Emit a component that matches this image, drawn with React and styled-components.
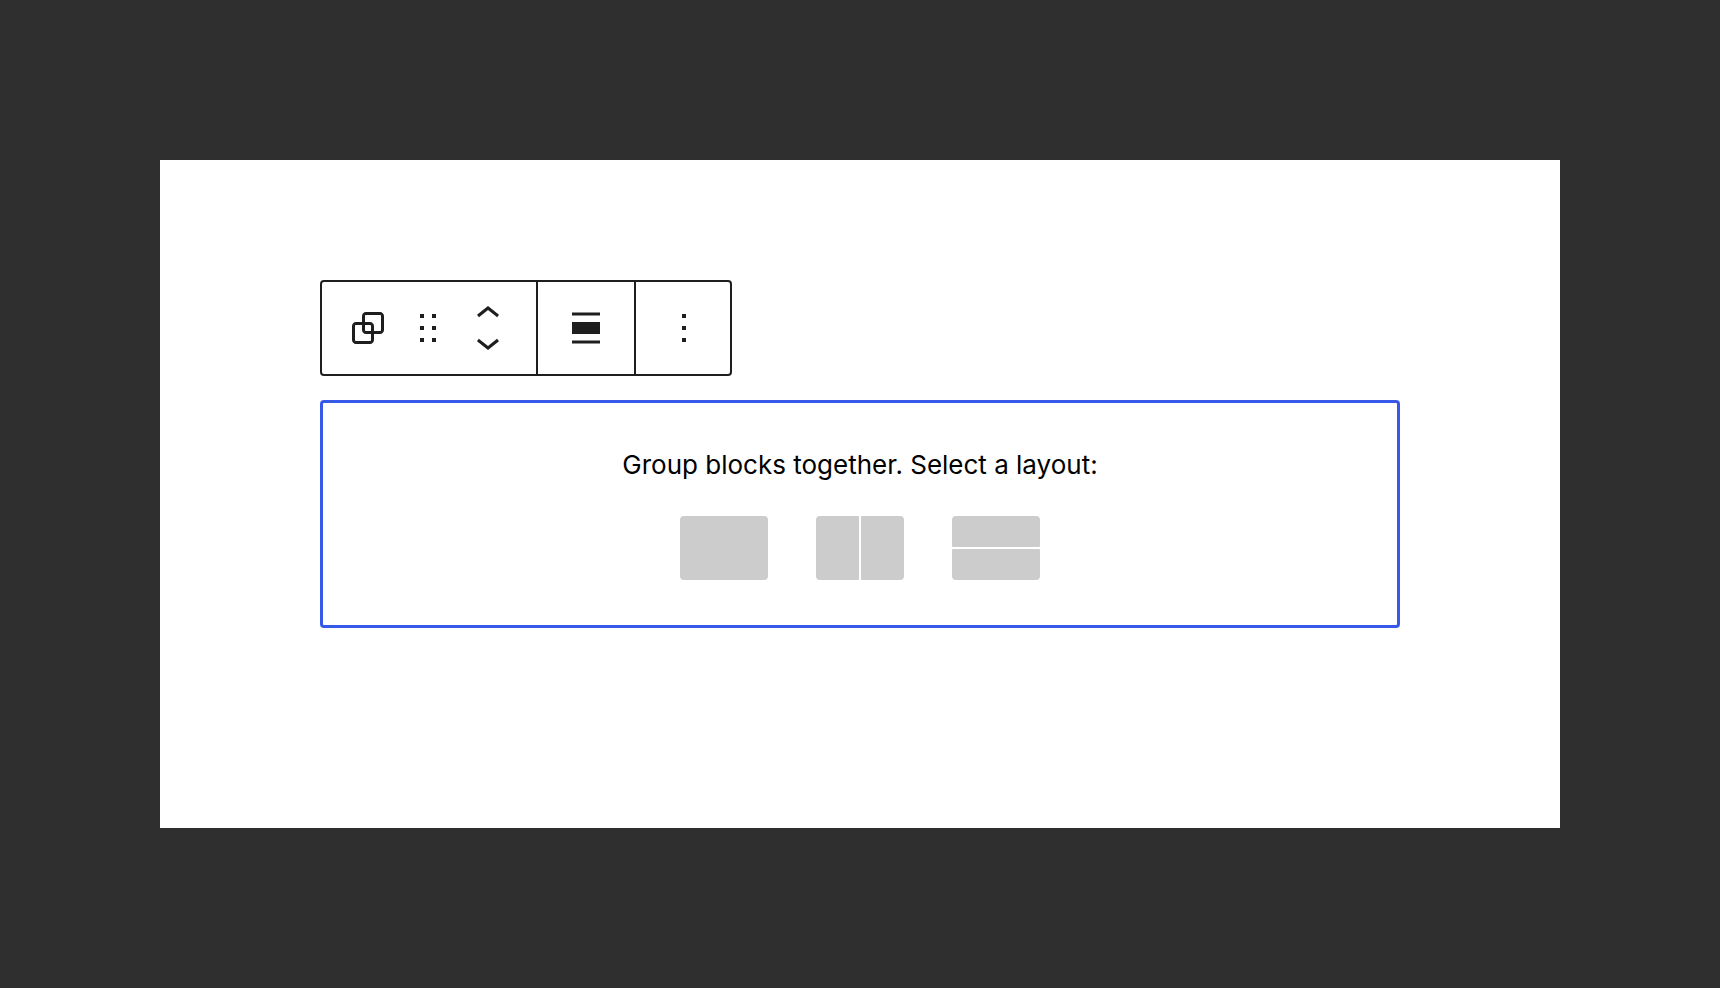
import React, { useState } from 'react'
import styled, { createGlobalStyle } from 'styled-components'

const GlobalStyle = createGlobalStyle`
    * {
        box-sizing: border-box;
    }

    body {
        margin: 0;
        background-color: #2f2f2f;
        color: #000;
        font-family: Inter, "Liberation Sans", sans-serif;
    }
`;

const Page = styled.div`
    display: flex;
    min-height: 100vh;
    padding: 160px;
`;

const Canvas = styled.main`
    flex: 1;
    display: flex;
    flex-direction: column;
    align-items: flex-start;
    gap: 24px;
    padding: 120px 160px;
    background-color: #fff;
`;

const Toolbar = styled.div`
    display: flex;
    border-radius: 4px;
    outline: 2px solid #1e1e1e;
    outline-offset: -2px;
`;

const ToolbarGroup = styled.div`
    display: flex;
    gap: 12px;
    padding: 24px;

    & + & {
        border-left: 2px solid #1e1e1e;
    }
`;

const ToolbarButton = styled.button`
    display: block;
    width: 48px;
    height: ${props => props.$half ? '24px' : '48px'};
    border: none;
    padding: 0;
    background: none;
    color: #1e1e1e;
    cursor: pointer;
`;

const Mover = styled.div`
    display: flex;
    flex-direction: column;
`;

const Icon = styled.svg`
    display: block;
    width: 100%;
    height: 100%;
    fill: currentColor;
`;

const Placeholder = styled.section`
    align-self: stretch;
    display: flex;
    flex-direction: column;
    align-items: center;
    gap: 34px;
    padding: 45px;
    border: 3px solid #3858e9;
    border-radius: 4px;
`;

const Instructions = styled.p`
    margin: 0;
    font-size: 26px;
    line-height: 34px;
    text-align: center;
`;

const Layouts = styled.div`
    display: flex;
    flex-wrap: wrap;
    justify-content: center;
    gap: 48px;
`;

const LayoutButton = styled.button`
    display: flex;
    flex-direction: ${props => props.$direction};
    gap: 2px;
    width: 88px;
    height: 64px;
    border: none;
    border-radius: 4px;
    padding: 0;
    overflow: hidden;
    background: none;
    cursor: pointer;
`;

const Cell = styled.span`
    flex: 1;
    border-radius: 1px;
    background-color: #ccc;
`;

const layouts = [
    { name: 'Group', direction: 'row', cells: 1 },
    { name: 'Row', direction: 'row', cells: 2 },
    { name: 'Stack', direction: 'column', cells: 2 },
]

const App = () => {

    const [selected, setSelected] = useState(null);

    return (
        <>
            <GlobalStyle />
            <Page>
                <Canvas>
                    <Toolbar role="toolbar" aria-label="Block tools">
                        <ToolbarGroup>
                            <ToolbarButton aria-label="Group">
                                <Icon viewBox="0 0 24 24">
                                    <path d="M18 4h-7c-1.1 0-2 .9-2 2v3H6c-1.1 0-2 .9-2 2v7c0 1.1.9 2 2 2h7c1.1 0 2-.9 2-2v-3h3c1.1 0 2-.9 2-2V6c0-1.1-.9-2-2-2zm-4.5 14c0 .3-.2.5-.5.5H6c-.3 0-.5-.2-.5-.5v-7c0-.3.2-.5.5-.5h3V13c0 1.1.9 2 2 2h2.5v3zm0-4.5H11c-.3 0-.5-.2-.5-.5v-2.5H13c.3 0 .5.2.5.5v2.5zm5-.5c0 .3-.2.5-.5.5h-3V11c0-1.1-.9-2-2-2h-2.5V6c0-.3.2-.5.5-.5h7c.3 0 .5.2.5.5v7z" />
                                </Icon>
                            </ToolbarButton>
                            <ToolbarButton aria-label="Drag">
                                <Icon viewBox="0 0 24 24">
                                    <path d="M8 5h2v2H8zM8 11h2v2H8zM8 17h2v2H8zM14 5h2v2h-2zM14 11h2v2h-2zM14 17h2v2h-2z" />
                                </Icon>
                            </ToolbarButton>
                            <Mover>
                                <ToolbarButton $half aria-label="Move up">
                                    <Icon viewBox="0 7 24 12">
                                        <path d="M6.5 12.4L12 8l5.5 4.4-.9 1.2L12 10l-4.5 3.6-1-1.2z" />
                                    </Icon>
                                </ToolbarButton>
                                <ToolbarButton $half aria-label="Move down">
                                    <Icon viewBox="0 5 24 12">
                                        <path d="M17.5 11.6L12 16l-5.5-4.4.9-1.2L12 14l4.5-3.6 1 1.2z" />
                                    </Icon>
                                </ToolbarButton>
                            </Mover>
                        </ToolbarGroup>
                        <ToolbarGroup>
                            <ToolbarButton aria-label="Align">
                                <Icon viewBox="0 0 24 24">
                                    <path d="M5 4.25h14v1.5H5zM5 9h14v6H5zM5 18.25h14v1.5H5z" />
                                </Icon>
                            </ToolbarButton>
                        </ToolbarGroup>
                        <ToolbarGroup>
                            <ToolbarButton aria-label="Options">
                                <Icon viewBox="0 0 24 24">
                                    <path d="M11 5h2v2h-2zM11 11h2v2h-2zM11 17h2v2h-2z" />
                                </Icon>
                            </ToolbarButton>
                        </ToolbarGroup>
                    </Toolbar>

                    <Placeholder>
                        <Instructions>Group blocks together. Select a layout:</Instructions>
                        <Layouts>
                            {layouts.map(item => (
                                <LayoutButton
                                    key={item.name}
                                    $direction={item.direction}
                                    aria-label={item.name}
                                    aria-pressed={selected === item.name}
                                    onClick={() => setSelected(item.name)}
                                >
                                    {Array.from({ length: item.cells }, (_, index) => <Cell key={index} />)}
                                </LayoutButton>
                            ))}
                        </Layouts>
                    </Placeholder>
                </Canvas>
            </Page>
        </>
    )
}

export default App
